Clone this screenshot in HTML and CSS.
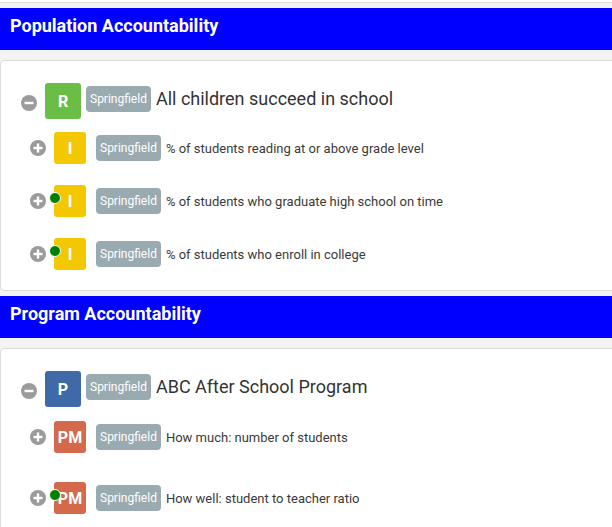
FILE: index.html
```html
<!DOCTYPE html>
<html>
<head>
<meta charset="utf-8">
<link rel="stylesheet" href="styles.css">
</head>
<body>
<div class="stub"></div>

<div class="section-header">Population Accountability</div>
<div class="card">
  <div class="row parent">
    <svg class="toggle" viewBox="0 0 16 16"><circle cx="8" cy="8" r="8" fill="#9b9b9b"/><rect x="3.5" y="6.8" width="9" height="2.4" fill="#fff"/></svg>
    <div class="tile tile-lg green">R</div>
    <span class="badge">Springfield</span>
    <span class="title">All children succeed in school</span>
  </div>
  <div class="children">
    <div class="row child">
      <svg class="toggle" viewBox="0 0 16 16"><circle cx="8" cy="8" r="8" fill="#9b9b9b"/><rect x="3.5" y="6.8" width="9" height="2.4" fill="#fff"/><rect x="6.8" y="3.5" width="2.4" height="9" fill="#fff"/></svg>
      <div class="tile yellow">I</div>
      <span class="badge">Springfield</span>
      <span class="label">% of students reading at or above grade level</span>
    </div>
    <div class="row child">
      <svg class="toggle" viewBox="0 0 16 16"><circle cx="8" cy="8" r="8" fill="#9b9b9b"/><rect x="3.5" y="6.8" width="9" height="2.4" fill="#fff"/><rect x="6.8" y="3.5" width="2.4" height="9" fill="#fff"/></svg>
      <div class="tile yellow">I<span class="dot"></span></div>
      <span class="badge">Springfield</span>
      <span class="label">% of students who graduate high school on time</span>
    </div>
    <div class="row child">
      <svg class="toggle" viewBox="0 0 16 16"><circle cx="8" cy="8" r="8" fill="#9b9b9b"/><rect x="3.5" y="6.8" width="9" height="2.4" fill="#fff"/><rect x="6.8" y="3.5" width="2.4" height="9" fill="#fff"/></svg>
      <div class="tile yellow">I<span class="dot"></span></div>
      <span class="badge">Springfield</span>
      <span class="label">% of students who enroll in college</span>
    </div>
  </div>
</div>

<div class="section-header">Program Accountability</div>
<div class="card card-last">
  <div class="row parent">
    <svg class="toggle" viewBox="0 0 16 16"><circle cx="8" cy="8" r="8" fill="#9b9b9b"/><rect x="3.5" y="6.8" width="9" height="2.4" fill="#fff"/></svg>
    <div class="tile tile-lg blue">P</div>
    <span class="badge">Springfield</span>
    <span class="title">ABC After School Program</span>
  </div>
  <div class="children program">
    <div class="row child">
      <svg class="toggle" viewBox="0 0 16 16"><circle cx="8" cy="8" r="8" fill="#9b9b9b"/><rect x="3.5" y="6.8" width="9" height="2.4" fill="#fff"/><rect x="6.8" y="3.5" width="2.4" height="9" fill="#fff"/></svg>
      <div class="tile orange">PM</div>
      <span class="badge">Springfield</span>
      <span class="label">How much: number of students</span>
    </div>
    <div class="row child">
      <svg class="toggle" viewBox="0 0 16 16"><circle cx="8" cy="8" r="8" fill="#9b9b9b"/><rect x="3.5" y="6.8" width="9" height="2.4" fill="#fff"/><rect x="6.8" y="3.5" width="2.4" height="9" fill="#fff"/></svg>
      <div class="tile orange">PM<span class="dot"></span></div>
      <span class="badge">Springfield</span>
      <span class="label">How well: student to teacher ratio</span>
    </div>
  </div>
</div>
</body>
</html>
```

FILE: styles.css
```css
html, body {
  margin: 0;
  padding: 0;
}
body {
  background: #f3f3f3;
  font-family: Roboto, "Liberation Sans", Arial, sans-serif;
  overflow: hidden;
  width: 612px;
  height: 527px;
}
.stub {
  height: 2px;
  background: #fff;
  border-bottom: 1px solid #dcdcdc;
  margin-right: -10px;
}
.section-header {
  margin-top: 5px;
  background: #0000ff;
  color: #fff;
  font-weight: 700;
  font-size: 18px;
  line-height: 30px;
  padding: 3px 10px 9px 10px;
}
.card {
  margin-top: 10px;
  margin-right: -10px;
  background: #fff;
  border: 1px solid #dcdcdc;
  border-radius: 4px;
  padding: 22px 0 20px 20px;
}
.card-last {
  padding-bottom: 60px;
}
.row {
  display: flex;
  align-items: center;
}
.toggle {
  width: 16px;
  height: 16px;
  flex: none;
}
.parent .toggle {
  margin-top: 4px;
  margin-right: 8px;
}
.child .toggle {
  margin-right: 8px;
}
.tile {
  position: relative;
  width: 32px;
  height: 32px;
  border-radius: 3px;
  color: #fff;
  font-weight: 700;
  font-size: 16px;
  display: flex;
  align-items: center;
  justify-content: center;
  flex: none;
}
.tile-lg {
  width: 36px;
  height: 36px;
}
.green { background: #6abd45; }
.yellow { background: #f3c800; }
.blue { background: #4069a8; }
.orange { background: #d5694b; }
.badge {
  background: #99aab1;
  color: #fff;
  font-size: 12px;
  border-radius: 4px;
  height: 26px;
  line-height: 26px;
  padding: 0 4px;
  flex: none;
}
.parent .badge {
  margin: 0 5px 4px 5px;
}
.parent .title {
  margin-bottom: 5px;
}
.child .badge {
  margin-left: 10px;
  margin-right: 5px;
}
.title {
  font-size: 18px;
  color: #333;
}
.label {
  font-size: 13px;
  color: #3a3a3a;
}
.children {
  margin-top: 13px;
  margin-left: 9px;
  display: flex;
  flex-direction: column;
  gap: 21px;
}
.children.program {
  margin-top: 14px;
  gap: 29px;
}
.dot {
  position: absolute;
  left: -5px;
  top: 7px;
  width: 10px;
  height: 10px;
  border-radius: 50%;
  background: #008000;
  border: 1px solid #fff;
}
```
